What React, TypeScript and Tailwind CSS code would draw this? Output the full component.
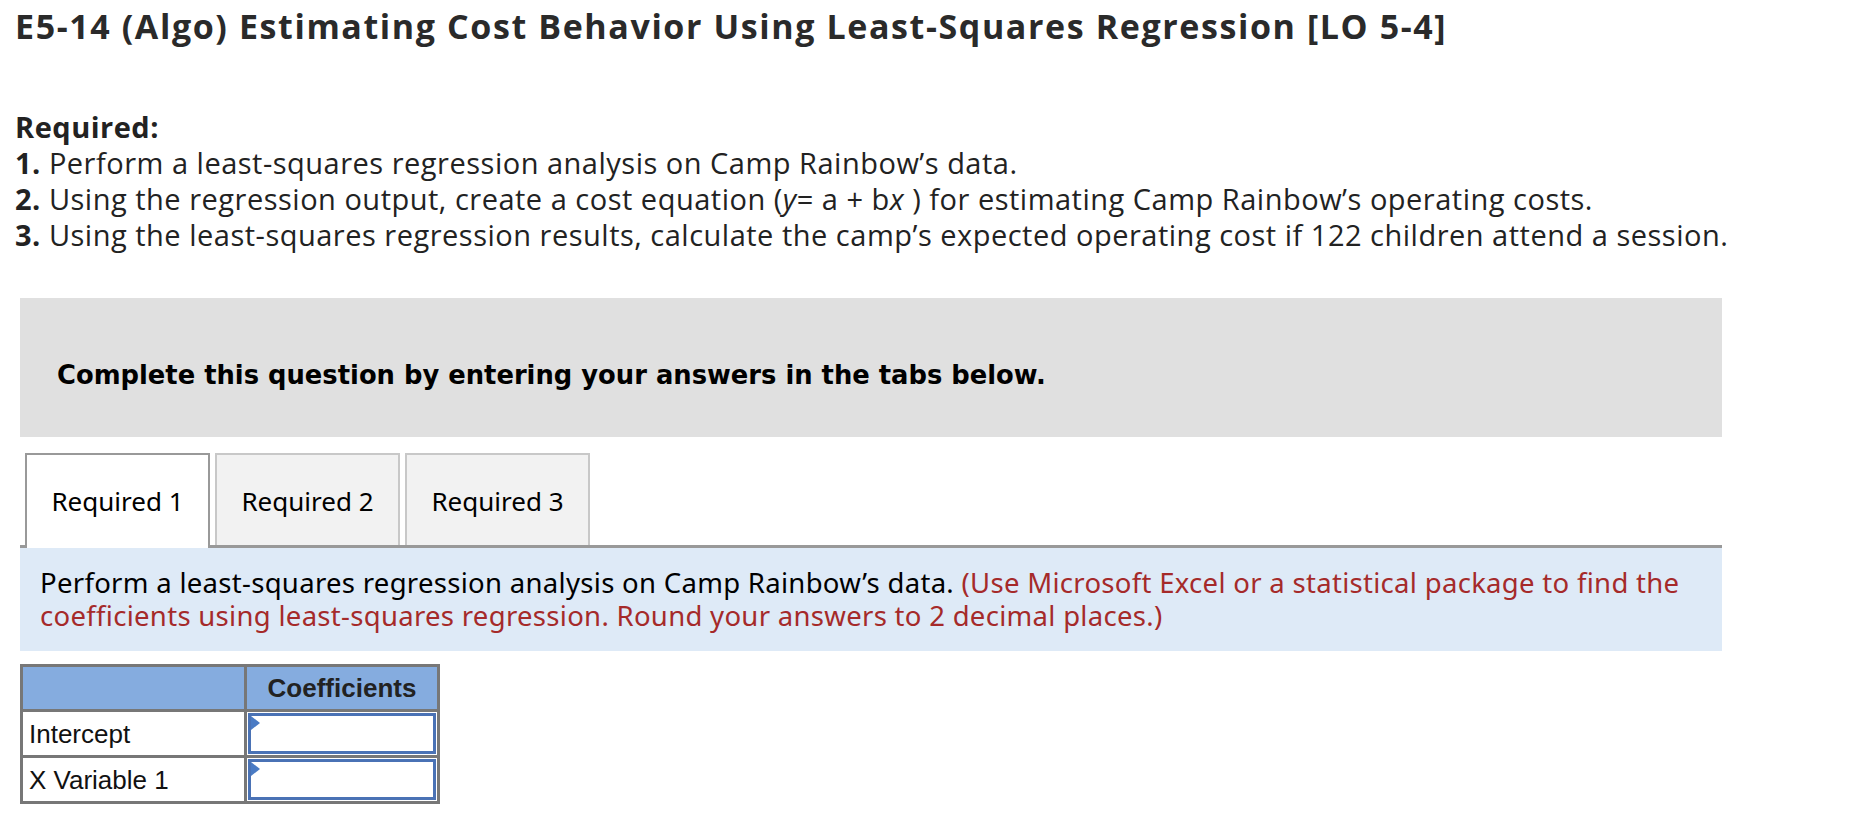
import React from "react";

function InputCell() {
  return (
    <td className="border-[3px] border-[#777777] p-[1px] h-[46px]">
      <div className="relative h-[41px] w-full border-[3px] border-[#4a72b5] bg-white">
        <div className="absolute left-[0px] top-[0px] w-0 h-0 border-t-[7px] border-b-[7px] border-l-[9px] border-t-transparent border-b-transparent border-l-[#4a7bc4]" />
      </div>
    </td>
  );
}

export default function App() {
  return (
    <div className="bg-white w-[1854px] h-[816px] overflow-hidden">
      <div className="pl-[15px] pt-[6px]" style={{ fontFamily: "'Open Sans', Lato, sans-serif" }}>
        <h1 className="text-[34px] leading-[40px] font-bold tracking-[1.6px] text-[#2a2a2a]">
          E5-14 (Algo) Estimating Cost Behavior Using Least-Squares Regression [LO 5-4]
        </h1>
        <div className="mt-[63px] text-[29px] leading-[36px] tracking-[0.5px] text-[#222222]">
          <div className="font-bold">Required:</div>
          <div><span className="font-bold">1.</span> Perform a least-squares regression analysis on Camp Rainbow’s data.</div>
          <div>
            <span className="font-bold">2.</span> Using the regression output, create a cost equation (<i>y</i>= a + b<i>x</i>
            {" "}) for estimating Camp Rainbow’s operating costs.
          </div>
          <div><span className="font-bold">3.</span> Using the least-squares regression results, calculate the camp’s expected operating cost if 122 children attend a session.</div>
        </div>
      </div>

      <div className="ml-[20px] w-[1702px]" style={{ fontFamily: "'Noto Sans', 'DejaVu Sans', sans-serif" }}>
        <div className="mt-[45px] h-[139px] bg-[#e0e0e0] pl-[37px] pt-[62px]">
          <div className="text-[25.8px] leading-[30px] font-bold text-black" style={{ fontFamily: "'DejaVu Sans', Verdana, sans-serif" }}>
            Complete this question by entering your answers in the tabs below.
          </div>
        </div>

        <div className="mt-[16px] flex items-end gap-[5px] pl-[5px] border-b-[3px] border-[#999999]">
          <div className="w-[185px] h-[95px] mb-[-3px] bg-white border-2 border-b-0 border-[#999999] flex items-center justify-center text-[26px] text-black">
            Required 1
          </div>
          <div className="w-[185px] h-[92px] pt-[3px] bg-[#f2f2f2] border-2 border-b-0 border-[#c8c8c8] flex items-center justify-center text-[26px] text-black">
            Required 2
          </div>
          <div className="w-[185px] h-[92px] pt-[3px] bg-[#f2f2f2] border-2 border-b-0 border-[#c8c8c8] flex items-center justify-center text-[26px] text-black">
            Required 3
          </div>
        </div>

        <div className="bg-[#deeaf7] h-[103px] pl-[20px] pt-[19px] text-[27.5px] leading-[32.5px] tracking-[0.3px] text-black">
          Perform a least-squares regression analysis on Camp Rainbow’s data.{" "}
          <span className="text-[#a52a2a]">
            (Use Microsoft Excel or a statistical package to find the coefficients using least-squares regression. Round your answers to 2 decimal places.)
          </span>
        </div>

        <table className="mt-[13px] border-collapse" style={{ fontFamily: "'Liberation Sans', Arial, sans-serif" }}>
          <tbody>
            <tr className="bg-[#85acdf]">
              <td className="w-[224px] h-[45px] border-[3px] border-[#777777]" />
              <td className="w-[193px] h-[45px] border-[3px] border-[#777777] text-center font-bold text-[26px] text-[#222222]">
                Coefficients
              </td>
            </tr>
            <tr>
              <td className="h-[46px] border-[3px] border-[#777777] pl-[6px] pt-[2px] text-[26px] text-[#111111]">Intercept</td>
              <InputCell />
            </tr>
            <tr>
              <td className="h-[46px] border-[3px] border-[#777777] pl-[6px] pt-[2px] text-[26px] text-[#111111]">X Variable 1</td>
              <InputCell />
            </tr>
          </tbody>
        </table>
      </div>
    </div>
  );
}
